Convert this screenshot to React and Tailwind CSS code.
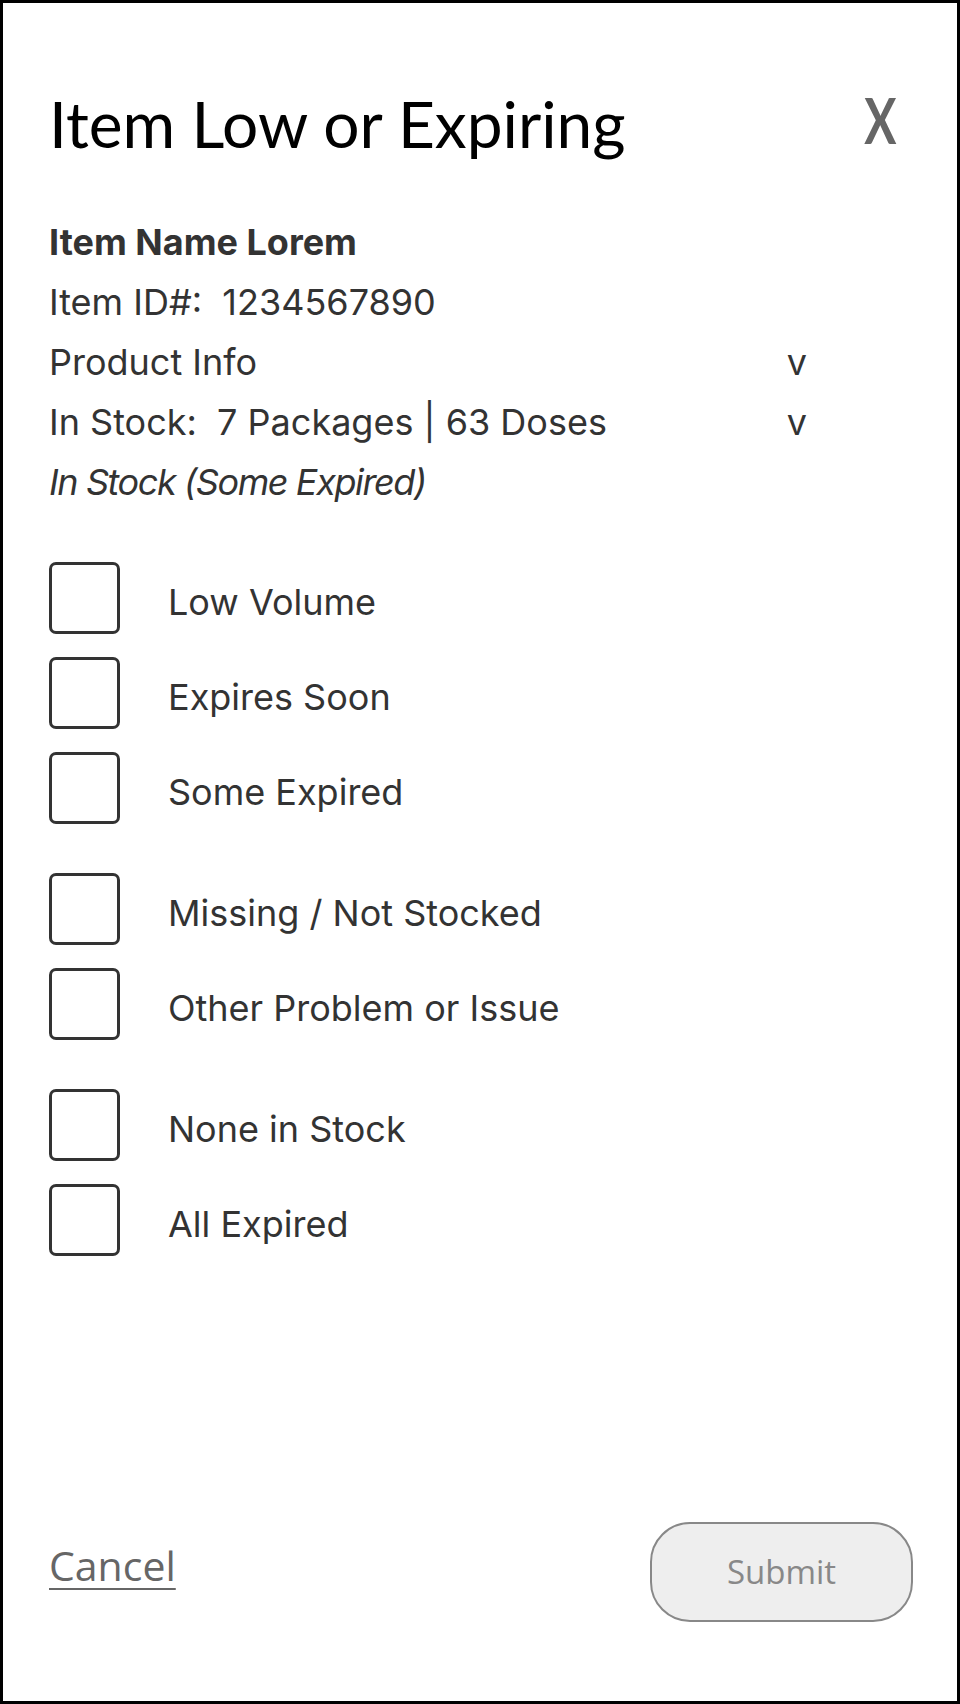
import React from 'react'

const body = { fontFamily: 'Inter, "Noto Sans", sans-serif' }
const lato = { fontFamily: 'Lato, "Open Sans", sans-serif' }
const open = { fontFamily: '"Open Sans", "Noto Sans", sans-serif' }

// checkbox groups, spaced apart a little more between groups
const groups = [
  ['Low Volume', 'Expires Soon', 'Some Expired'],
  ['Missing / Not Stocked', 'Other Problem or Issue'],
  ['None in Stock', 'All Expired'],
]

function Check({ label }) {
  return (
    <label className="flex items-center gap-[48px] cursor-pointer">
      <span className="block h-[72px] w-[71px] shrink-0 rounded-[7px] border-[3px] border-[#333]" />
      <span className="mt-[7px] text-[36px] leading-[60px] text-[#333]" style={body}>
        {label}
      </span>
    </label>
  )
}

export default function App() {
  return (
    <div className="flex h-[1704px] w-[960px] flex-col border-[3px] border-black bg-white pl-[46px] pr-[44px]">
      <div className="mt-[82px] flex items-start justify-between">
        <h1 className="text-[64px] leading-[77px] text-black" style={lato}>
          Item Low or Expiring
        </h1>
        <button
          className="mr-[11px] -translate-y-1 scale-x-[0.75] text-[64px] font-bold leading-[77px] text-[#666]"
          style={lato}
        >
          X
        </button>
      </div>

      <div className="mt-[50px] w-[758px] text-[36px] leading-[60px] text-[#333]" style={body}>
        <div className="font-bold">Item Name Lorem</div>
        <div className="whitespace-pre">Item ID#:  1234567890</div>
        <div className="flex justify-between">
          <span>Product Info</span>
          <span>v</span>
        </div>
        <div className="flex justify-between whitespace-pre">
          <span>In Stock:  7 Packages | 63 Doses</span>
          <span>v</span>
        </div>
        <div className="italic tracking-[-1.4px]">In Stock (Some Expired)</div>
      </div>

      <div className="mt-[50px] flex flex-col gap-[49px]">
        {groups.map((g, i) => (
          <div key={i} className="flex flex-col gap-[23px]">
            {g.map((l) => (
              <Check key={l} label={l} />
            ))}
          </div>
        ))}
      </div>

      <div className="mt-auto mb-[79px] flex items-center justify-between">
        <a
          href="#"
          className="mb-[12px] text-[41px] text-[#666] underline decoration-2 underline-offset-[7px]"
          style={open}
        >
          Cancel
        </a>
        <button
          className="h-[100px] w-[263px] rounded-[40px] border-[2.5px] border-[#888] bg-[#eee] text-[33px] text-[#888]"
          style={open}
        >
          Submit
        </button>
      </div>
    </div>
  )
}
